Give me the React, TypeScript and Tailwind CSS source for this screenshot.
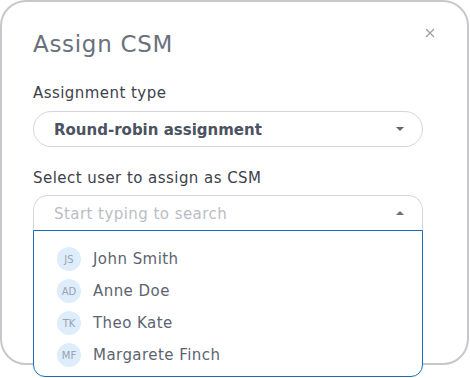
const users = [
  { initials: "JS", name: "John Smith" },
  { initials: "AD", name: "Anne Doe" },
  { initials: "TK", name: "Theo Kate" },
  { initials: "MF", name: "Margarete Finch" },
]

export default function App() {
  return (
    <div className="w-[470px] h-[378px] bg-white font-['DejaVu_Sans',sans-serif] overflow-hidden">
      <div className="relative w-[469px] h-[365px] border-2 border-[#c6c8cc] rounded-[26px] bg-white px-[31px] pt-[27px]">
        <button className="absolute right-[32px] top-[26px] text-[#9aa0a8]">
          <svg width="10" height="10" viewBox="0 0 10 10" fill="none" stroke="currentColor" strokeWidth="1.2">
            <path d="M1 1l8 8M9 1l-8 8" />
          </svg>
        </button>

        <h2 className="text-[23px] leading-[30px] tracking-[0.03em] text-[#6b717c]">Assign CSM</h2>

        <div className="mt-[24px] text-[15px] leading-[20px] tracking-[0.03em] text-[#3d424a]">Assignment type</div>
        <div className="mt-[8px] h-[36px] w-[390px] border border-[#d3d6da] rounded-full flex items-center justify-between pl-[20px] pr-[18px]">
          <span className="text-[15px] leading-[20px] pt-px font-semibold text-[#4b5260]">Round-robin assignment</span>
          <span className="w-0 h-0 border-l-[4px] border-r-[4px] border-t-[4px] border-l-transparent border-r-transparent border-t-[#5f6570]" />
        </div>

        <div className="mt-[21px] text-[15px] leading-[20px] tracking-[0.03em] text-[#3d424a]">Select user to assign as CSM</div>
        <div className="relative mt-[7px] w-[390px]">
          <div className="h-[35px] border border-b-0 border-[#d3d6da] rounded-t-[15px] flex items-center justify-between pl-[20px] pr-[18px]">
            <span className="text-[15px] leading-[20px] pt-px tracking-[0.03em] text-[#b9bdc4]">Start typing to search</span>
            <span className="w-0 h-0 border-l-[4px] border-r-[4px] border-b-[4px] border-l-transparent border-r-transparent border-b-[#6a707a]" />
          </div>
          <ul className="absolute left-0 top-[35px] w-[390px] h-[147px] bg-white border border-[#1a6dbd] rounded-b-[12px] pt-[12px] pl-[23px]">
            {users.map((u) => (
              <li key={u.initials} className="h-[32px] flex items-center gap-[12px]">
                <span className="w-[24px] h-[24px] rounded-full bg-[#deedfb] flex items-center justify-center text-[10px] text-[#9aa2ad]">
                  {u.initials}
                </span>
                <span className="text-[15px] leading-[20px] tracking-[0.03em] text-[#5d6470]">{u.name}</span>
              </li>
            ))}
          </ul>
        </div>
      </div>
    </div>
  )
}
